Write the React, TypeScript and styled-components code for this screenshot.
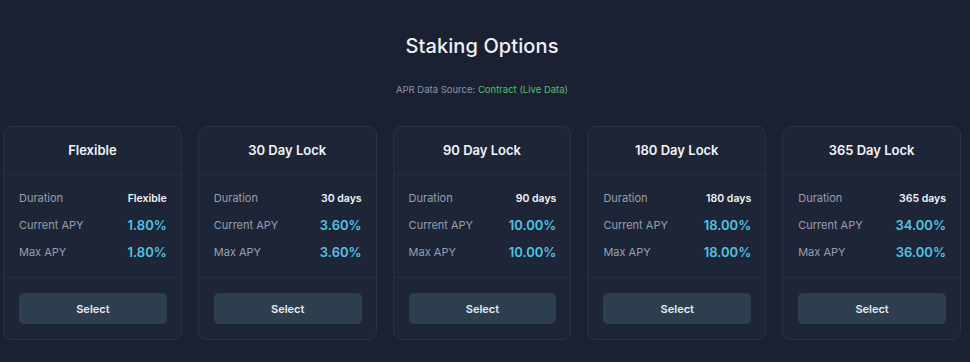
import React from "react";
import styled, { createGlobalStyle } from "styled-components";

const GlobalStyle = createGlobalStyle`
  html, body {
    margin: 0;
    padding: 0;
    background: #1b2133;
  }
  body {
    font-family: Inter, "Noto Sans", sans-serif;
    -webkit-font-smoothing: antialiased;
  }
`;

// Styled Components
const Page = styled.div`
  width: 970px;
  height: 362px;
  box-sizing: border-box;
  padding: 34px 9px 0 3px;
  background: #1b2133;
  overflow: hidden;
`;

const Title = styled.h2`
  margin: 0;
  text-align: center;
  font-size: 20px;
  line-height: 24px;
  font-weight: 500;
  color: #eef0f4;
  letter-spacing: 0.1px;
`;

const SourceLine = styled.div`
  margin-top: 26px;
  text-align: center;
  font-size: 9.5px;
  line-height: 12px;
  color: #8d94a3;
`;

const SourceValue = styled.span`
  color: #4fc06a;
`;

const CardRow = styled.div`
  margin-top: 30px;
  display: grid;
  grid-template-columns: repeat(5, 1fr);
  gap: 16px;
`;

const Card = styled.div`
  background: #1e2537;
  border: 1px solid #293145;
  border-radius: 8px;
  display: flex;
  flex-direction: column;
`;

const CardHeader = styled.div`
  height: 48px;
  padding-bottom: 1px;
  box-sizing: border-box;
  display: flex;
  align-items: center;
  justify-content: center;
  border-bottom: 1px solid #262e41;
  font-size: 13px;
  font-weight: 600;
  color: #f1f3f6;
`;

const CardBody = styled.div`
  padding: 15px 14px 17px 15px;
  display: flex;
  flex-direction: column;
  gap: 11px;
  border-bottom: 1px solid #262e41;
`;

const Row = styled.div`
  height: 16px;
  display: flex;
  align-items: center;
  justify-content: space-between;
`;

const Label = styled.span`
  font-size: 11px;
  color: #979fae;
`;

const Value = styled.span<{ accent?: boolean }>`
  font-size: ${(p) => (p.accent ? "13px" : "10.5px")};
  font-weight: 600;
  color: ${(p) => (p.accent ? "#4ec3e6" : "#f1f3f6")};
`;

const CardFooter = styled.div`
  padding: 15px 14px 15px 15px;
`;

const SelectButton = styled.button`
  display: block;
  width: 100%;
  height: 31px;
  border: none;
  border-radius: 5px;
  background: #2d3f4e;
  color: #e8ebef;
  font-family: inherit;
  font-size: 11px;
  font-weight: 600;
  cursor: pointer;
`;

interface StakingOption {
  name: string;
  duration: string;
  current: string;
  max: string;
}

const options: StakingOption[] = [
  { name: "Flexible", duration: "Flexible", current: "1.80%", max: "1.80%" },
  { name: "30 Day Lock", duration: "30 days", current: "3.60%", max: "3.60%" },
  { name: "90 Day Lock", duration: "90 days", current: "10.00%", max: "10.00%" },
  { name: "180 Day Lock", duration: "180 days", current: "18.00%", max: "18.00%" },
  { name: "365 Day Lock", duration: "365 days", current: "34.00%", max: "36.00%" },
];

const App: React.FC = () => {
  return (
    <Page>
      <GlobalStyle />
      <Title>Staking Options</Title>
      <SourceLine>
        APR Data Source: <SourceValue>Contract (Live Data)</SourceValue>
      </SourceLine>
      <CardRow>
        {options.map((opt) => (
          <Card key={opt.name}>
            <CardHeader>{opt.name}</CardHeader>
            <CardBody>
              <Row>
                <Label>Duration</Label>
                <Value>{opt.duration}</Value>
              </Row>
              <Row>
                <Label>Current APY</Label>
                <Value accent>{opt.current}</Value>
              </Row>
              <Row>
                <Label>Max APY</Label>
                <Value accent>{opt.max}</Value>
              </Row>
            </CardBody>
            <CardFooter>
              <SelectButton>Select</SelectButton>
            </CardFooter>
          </Card>
        ))}
      </CardRow>
    </Page>
  );
};

export default App;
